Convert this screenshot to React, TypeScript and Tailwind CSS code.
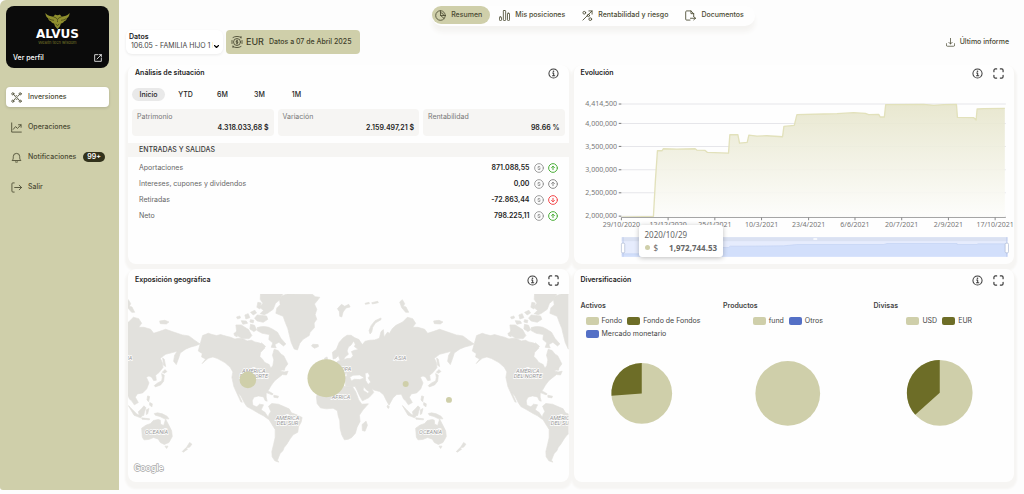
import type { ReactNode } from "react";

type IconProps = { className?: string };

const stroke = {
  fill: "none",
  stroke: "currentColor",
  strokeLinecap: "round" as const,
  strokeLinejoin: "round" as const,
};

function InfoIcon() {
  return (
    <svg viewBox="0 0 24 24" className="size-[11px]" {...stroke} strokeWidth="2.2">
      <circle cx="12" cy="12" r="10" />
      <path d="M10 11h2.4v6M9.8 17h5" />
      <circle cx="12" cy="7.2" r="0.7" fill="currentColor" />
    </svg>
  );
}

function ExpandIcon() {
  return (
    <svg viewBox="0 0 24 24" className="size-[11px]" {...stroke} strokeWidth="2.6">
      <path d="M2 8V5a3 3 0 0 1 3-3h3M16 2h3a3 3 0 0 1 3 3v3M22 16v3a3 3 0 0 1-3 3h-3M8 22H5a3 3 0 0 1-3-3v-3" />
    </svg>
  );
}

function OwlLogo() {
  return (
    <svg viewBox="0 0 72 46" className="h-[16px] w-[25px]" fill="#8f8f2e">
      <path d="M1 0c7 8 14 9 23 11l5-7c3 3 11 3 14 0l5 7c9-2 16-3 23-11-1 9-4 13-8 15-1 5-4 8-8 9-2 4-5 6-9 6l-3 8-7 8-7-8-3-8c-4 0-7-2-9-6-4-1-7-4-8-9C5 13 2 9 1 0z" />
      <path
        d="M25 12c4 0 8 2 11 7 3-5 7-7 11-7M36 21v5M11 16c5 4 9 4 15 5M61 16c-5 4-9 4-15 5M31 32l5 4 5-4"
        fill="none"
        stroke="#0b0b0b"
        strokeWidth="1.3"
      />
    </svg>
  );
}

function ExternalIcon() {
  return (
    <svg viewBox="0 0 24 24" className="size-[8px]" {...stroke} strokeWidth="2.4">
      <path d="M11 2H2v20h20v-9M15 2h7v7M22 2 9 15" />
    </svg>
  );
}

function NetworkIcon({ className }: IconProps) {
  return (
    <svg viewBox="0 0 24 24" className={className} {...stroke} strokeWidth="1.8">
      <circle cx="4" cy="4" r="2.4" />
      <circle cx="20" cy="4" r="2.4" />
      <circle cx="4" cy="20" r="2.4" />
      <circle cx="20" cy="20" r="2.4" />
      <path d="M6 6l2.500 2.500M18 6l-2.500 2.500M6 18l2.500-2.500M18 18l-2.500-2.500" />
      <path d="M14.500 9.500c-.6-1-1.500-1.400-2.600-1.400-1.500 0-2.500.8-2.500 1.900 0 2.700 5.400 1.300 5.400 4 0 1.200-1.200 2-2.700 2-1.400 0-2.400-.6-2.900-1.700" />
    </svg>
  );
}

function TrendIcon({ className }: IconProps) {
  return (
    <svg viewBox="0 0 24 24" className={className} {...stroke} strokeWidth="1.9">
      <path d="M1.500 2v20h21M5 16l5-6 4 4 8-8M16.500 6H22v5.500" />
    </svg>
  );
}

function BellIcon({ className }: IconProps) {
  return (
    <svg viewBox="0 0 24 24" className={className} {...stroke} strokeWidth="1.9">
      <path d="M3 18c2-2 2-4 2-8a7 7 0 0 1 14 0c0 4 0 6 2 8zM9.500 21.500c1.500 1 3.500 1 5 0" />
    </svg>
  );
}

function ExitIcon({ className }: IconProps) {
  return (
    <svg viewBox="0 0 24 24" className={className} {...stroke} strokeWidth="1.9">
      <path d="M7 2H4a2 2 0 0 0-2 2v16c0 1 1 2 2 2h3M8 12h15M18 7l5 5-5 5" />
    </svg>
  );
}

function PieIcon({ className }: IconProps) {
  return (
    <svg viewBox="0 0 24 24" className={className} {...stroke} strokeWidth="1.8">
      <circle cx="12" cy="12" r="10.500" />
      <path d="M12 1.500V12l8 6.500M12 12h10.500M12 5.500a7 7 0 0 1 7 6.500" />
    </svg>
  );
}

function BarsIcon({ className }: IconProps) {
  return (
    <svg viewBox="0 0 24 24" className={className} {...stroke} strokeWidth="1.8">
      <rect x="1" y="15" width="4.500" height="8" rx="1.500" />
      <rect x="9.500" y="1" width="5" height="22" rx="1.500" />
      <rect x="18.500" y="7" width="4.500" height="16" rx="1.500" />
    </svg>
  );
}

function PercentIcon({ className }: IconProps) {
  return (
    <svg viewBox="0 0 24 24" className={className} {...stroke} strokeWidth="1.9">
      <circle cx="5" cy="6" r="3" />
      <circle cx="14" cy="12" r="2.500" />
      <circle cx="18" cy="20" r="3" />
      <path d="M2 22 22 2M15 2h7v7" />
    </svg>
  );
}

function FileIcon({ className }: IconProps) {
  return (
    <svg viewBox="0 0 24 24" className={className} {...stroke} strokeWidth="1.9">
      <path d="M11 22H3.500a2 2 0 0 1-2-2V4c0-1 1-2 2-2H13l6 6v6M13 2v6h6M12 18h11M19 14.500l4 3.500-4 3.500" />
    </svg>
  );
}

function CurrencyIcon() {
  return (
    <svg viewBox="0 0 24 24" className="size-[12px]" {...stroke} strokeWidth="1.6">
      <circle cx="12" cy="12" r="7" />
      <path d="M13.800 10c-.5-.8-3.500-1-3.500.6 0 1.800 3.600 1 3.600 2.800 0 1.600-3 1.600-3.800.4M12 8v8M4 3c5-3 11-3 16 0M4 21c5 3 11 3 16 0M20 1v3M4 23v-3M2 9v6M22 9v6" />
    </svg>
  );
}

function DownloadIcon() {
  return (
    <svg viewBox="0 0 24 24" className="size-[9px]" {...stroke} strokeWidth="2">
      <path d="M12 1v15M7.500 11.500 12 16l4.500-4.500M1 15v4c0 2 1 3 3 3h16c2 0 3-1 3-3v-4" />
    </svg>
  );
}

function DollarBadge() {
  return (
    <svg viewBox="0 0 24 24" className="size-[10px] text-[#8b8b8b]" {...stroke} strokeWidth="2">
      <circle cx="12" cy="12" r="10.500" />
      <path d="M15 9.500c-.6-1-1.600-1.500-3-1.500-1.600 0-2.900.7-2.900 1.900 0 2.900 6 1.300 6 4.200 0 1.200-1.300 1.900-3.100 1.900-1.500 0-2.600-.5-3.200-1.500" />
    </svg>
  );
}

function ArrowBadge({ tone }: { tone: "up" | "flat" | "down" }) {
  const color = { up: "text-[#4caf3a]", flat: "text-[#8b8b8b]", down: "text-[#f2494c]" }[tone];
  return (
    <svg viewBox="0 0 24 24" className={"size-[10px] " + color} {...stroke} strokeWidth="2.400">
      <circle cx="12" cy="12" r="10.500" />
      <path d={tone === "down" ? "M12 8v8M8.500 13l3.500 3.500 3.500-3.500" : "M12 16V8M8.500 11l3.500-3.500 3.500 3.500"} />
    </svg>
  );
}

function Card({
  title,
  expand = true,
  tall = false,
  children,
}: {
  title: string;
  expand?: boolean;
  tall?: boolean;
  children: ReactNode;
}) {
  return (
    <section className="relative flex min-w-0 flex-col rounded-[8px] bg-[#fefefe] shadow-[0_4px_2px_3px_#f6f5f3]">
      <header className={"flex items-center justify-between pr-[10px] pl-[7px] " + (tall ? "h-[22px]" : "h-4")}>
        <h2 className="text-[7px] font-semibold text-[#222]">{title}</h2>
        <div className="flex gap-[10px] text-[#3c3c3c]">
          <button aria-label={"Información sobre " + title}>
            <InfoIcon />
          </button>
          {expand && (
            <button aria-label={"Ampliar " + title}>
              <ExpandIcon />
            </button>
          )}
        </div>
      </header>
      {children}
    </section>
  );
}

const menu = [
  { label: "Inversiones", Icon: NetworkIcon, active: true },
  { label: "Operaciones", Icon: TrendIcon },
  { label: "Notificaciones", Icon: BellIcon, badge: "99+" },
  { label: "Salir", Icon: ExitIcon },
];

function Sidebar() {
  return (
    <aside className="w-[119px] shrink-0 rounded-tl-[6px] rounded-bl-[3px] bg-[#cfcfaa] py-[6px] pr-[10px] pl-[6px]">
      <div className="flex h-[62px] flex-col rounded-[8px] bg-[#0b0b0b] pt-[7px] text-white">
        <div className="flex flex-col items-center">
          <OwlLogo />
          <span className="font-['DejaVu_Sans',sans-serif] text-[12px] leading-[11px] font-bold">ALVUS</span>
          <span className="text-[4px] leading-[6px] text-[#77772a]">Wealth tech wisdom</span>
        </div>
        <a
          href="#perfil"
          className="mt-auto flex items-center justify-between px-[7px] pb-[5px] text-[7px] leading-[10px] font-medium"
        >
          Ver perfil
          <ExternalIcon />
        </a>
      </div>
      <nav className="mt-[19px] flex flex-col gap-[10px]">
        {menu.map(({ label, Icon, active, badge }) => (
          <a
            key={label}
            href={"#" + label.toLowerCase()}
            className={
              "flex h-5 items-center rounded-[4px] pl-[5px] text-[7px] font-medium text-[#4a4a32] " +
              (active ? "bg-white shadow-[0_1px_3px_rgba(0,0,0,0.15)]" : "")
            }
          >
            <Icon className="mr-[6px] size-[11px]" />
            {label}
            {badge && (
              <span className="ml-[7px] rounded-full bg-[#32321c] px-[4px] text-[7px] leading-[10px] font-semibold text-white">
                {badge}
              </span>
            )}
          </a>
        ))}
      </nav>
    </aside>
  );
}

const sections = [
  { label: "Resumen", Icon: PieIcon, active: true },
  { label: "Mis posiciones", Icon: BarsIcon },
  { label: "Rentabilidad y riesgo", Icon: PercentIcon },
  { label: "Documentos", Icon: FileIcon },
];

function SectionNav() {
  return (
    <nav className="mx-auto flex gap-[6px] rounded-[10px] bg-[#fefefe] pr-[3px] pb-[2px] shadow-[0_6px_5px_0px_#f4f3f1]">
      {sections.map(({ label, Icon, active }) => (
        <a
          key={label}
          href={"#" + label.split(" ")[0].toLowerCase()}
          className={
            "flex h-[18px] items-center gap-[5px] rounded-full pr-[8px] pl-[3px] text-[7px] font-medium whitespace-nowrap text-[#4a4a32] " +
            (active ? "bg-[#cfcfaa]" : "")
          }
        >
          <Icon className="size-[11px]" />
          {label}
        </a>
      ))}
    </nav>
  );
}

function Toolbar() {
  return (
    <div className="flex items-center gap-[3px] pr-[5px]">
      <div className="flex h-6 w-[97px] flex-col justify-center rounded-[6px] bg-white pl-[3px] shadow-[0_1px_3px_rgba(0,0,0,0.08)]">
        <label htmlFor="portfolio" className="text-[7px] leading-[9px] font-semibold text-[#222]">
          Datos
        </label>
        <div className="flex items-center">
          <select
            id="portfolio"
            className="h-[12px] w-[84px] appearance-none overflow-hidden pl-[2px] text-[7px] text-[#444]"
          >
            <option>106.05 - FAMILIA HIJO 1 I</option>
          </select>
          <svg viewBox="0 0 10 6" className="ml-px h-[3px] w-[5px]" {...stroke} strokeWidth="2.200">
            <path d="M1 1l4 4 4-4" />
          </svg>
        </div>
      </div>
      <div className="flex h-6 items-center rounded-[4px] bg-[#cfcfaa] px-[7px] pl-[5px] text-[#3f3f2a]">
        <CurrencyIcon />
        <span className="ml-[3px] text-[9px] font-medium">EUR</span>
        <span className="ml-[5px] pr-[2px] text-[7px] font-medium">Datos a 07 de Abril 2025</span>
      </div>
      <button className="ml-auto flex items-center gap-[5px] text-[7px] font-medium text-[#4a4a32]">
        <DownloadIcon />
        Último informe
      </button>
    </div>
  );
}

const stats = [
  { label: "Patrimonio", value: "4.318.033,68 $" },
  { label: "Variación", value: "2.159.497,21 $" },
  { label: "Rentabilidad", value: "98.66 %" },
];

const flows: { label: string; value: string; tone: "up" | "flat" | "down" }[] = [
  { label: "Aportaciones", value: "871.088,55", tone: "up" },
  { label: "Intereses, cupones y dividendos", value: "0,00", tone: "flat" },
  { label: "Retiradas", value: "-72.863,44", tone: "down" },
  { label: "Neto", value: "798.225,11", tone: "up" },
];

function Analysis() {
  return (
    <Card title="Análisis de situación" expand={false}>
      <div className="flex gap-1 px-1 pt-[7px]">
        {["Inicio", "YTD", "6M", "3M", "1M"].map((range, i) => (
          <button
            key={range}
            className={
              "h-[13px] w-[33px] rounded-full text-[7px] leading-[13px] font-medium text-[#222] " +
              (i === 0 ? "bg-[#e9e9e9]" : "")
            }
          >
            {range}
          </button>
        ))}
      </div>
      <div className="mt-2 grid grid-cols-3 gap-1 px-1">
        {stats.map((s) => (
          <div key={s.label} className="rounded-[4px] bg-[#f6f5f3] px-[5px] pt-[2px] pb-[3px] leading-[11px]">
            <p className="text-[7px] text-[#777]">{s.label}</p>
            <p className="text-right text-[7px] font-semibold text-[#222]">{s.value}</p>
          </div>
        ))}
      </div>
      <h3 className="mt-[7px] bg-[#f6f5f3] pl-[11px] text-[7px] leading-[14px] font-medium text-[#3c3c3c]">
        ENTRADAS Y SALIDAS
      </h3>
      <table className="mt-[3px] w-full text-[7px]">
        <tbody>
          {flows.map((f) => (
            <tr key={f.label} className="h-4">
              <th scope="row" className="pl-[11px] text-left font-normal text-[#666]">
                {f.label}
              </th>
              <td className="pr-[11px]">
                <div className="flex items-center justify-end gap-1 font-semibold text-[#222]">
                  {f.value}
                  <DollarBadge />
                  <ArrowBadge tone={f.tone} />
                </div>
              </td>
            </tr>
          ))}
        </tbody>
      </table>
    </Card>
  );
}

const yTicks: [string, number][] = [
  ["4,414,500", 132],
  ["4,000,000", 190],
  ["3,500,000", 259],
  ["3,000,000", 329],
  ["2,500,000", 398],
  ["2,000,000", 468],
];

const xTicks: [string, number][] = [
  ["29/10/2020", 154],
  ["12/12/2020", 294],
  ["25/1/2021", 434],
  ["10/3/2021", 574],
  ["23/4/2021", 715],
  ["6/6/2021", 854],
  ["20/7/2021", 994],
  ["2/9/2021", 1134],
  ["17/10/2021", 1274],
];

const series =
  "155,471 250,469 256,360 262,272 276,272 280,266 320,267 375,266 380,270 405,271 412,277 475,279 479,224 503,224 508,249 531,247 536,225 560,228 590,227 637,230 641,199 672,196 680,164 760,162 800,161 850,158 885,160 895,164 925,163 930,171 942,171 946,134 1060,133 1090,136 1120,134 1158,133 1161,172 1210,173 1217,180 1220,147 1240,146 1303,145";

function Evolution() {
  return (
    <Card title="Evolución">
      <div className="relative">
        <svg viewBox="12 63 1320 549" className="w-full font-['Noto_Sans',sans-serif]">
          <defs>
            <linearGradient id="area" x1="0" y1="0" x2="0" y2="1">
              <stop offset="0" stopColor="#e6e5cb" />
              <stop offset="1" stopColor="#fdfdfb" />
            </linearGradient>
          </defs>
          {yTicks.map(([label, y]) => (
            <g key={label}>
              <path d={`M155 ${y}H1306`} stroke="#e6e6ea" strokeWidth="3" />
              <path d={`M146 ${y}h8`} stroke="#777" strokeWidth="3" />
              <text x="141" y={y + 7} textAnchor="end" fontSize="21" fill="#777">
                {label}
              </text>
            </g>
          ))}
          <polygon points={"155,471 " + series + " 1303,471"} fill="url(#area)" fillOpacity="0.9" />
          <polyline points={series} fill="none" stroke="#e2e1bb" strokeWidth="4" strokeLinejoin="round" />
          <path d="M154 472H1306" stroke="#a5a5a5" strokeWidth="3" />
          {xTicks.map(([label, x]) => (
            <g key={label}>
              <path d={`M${x} 472v8`} stroke="#888" strokeWidth="3" />
              <text x={x} y="500" textAnchor="middle" fontSize="21" fill="#777">
                {label}
              </text>
            </g>
          ))}
          <rect x="155" y="531" width="1156" height="59" fill="#e6ecfd" />
          <rect x="155" y="531" width="1156" height="12" fill="#dae1f2" />
          <path
            d="M155 581H250L258 563L475 562L480 558H520L640 557L680 553L940 553L950 550H1160V553H1220L1222 551H1311V590H155z"
            fill="#d2dffb"
          />
          <path
            d="M155 581H250L258 563L475 562L480 558H520L640 557L680 553L940 553L950 550H1160V553H1220L1222 551H1311"
            fill="none"
            stroke="#c3d2f3"
            strokeWidth="2"
          />
          <rect x="729" y="534" width="12" height="5" rx="2" fill="#fff" />
          {[159, 1309].map((x) => (
            <g key={x}>
              <path d={`M${x} 531v59`} stroke="#b4c3ea" strokeWidth="2" />
              <rect x={x - 5} y="549" width="10" height="29" rx="3" fill="#fff" stroke="#acb8d1" strokeWidth="2" />
            </g>
          ))}
        </svg>
        <div className="absolute top-[144px] left-[65px] rounded-[3px] bg-white px-[6px] py-[3px] font-['Noto_Sans',sans-serif] text-[8px] text-[#666] shadow-[0_1px_5px_rgba(0,0,0,0.25)]">
          <p className="leading-[13px]">2020/10/29</p>
          <p className="flex items-center leading-[13px]">
            <span className="mr-1 size-[5px] rounded-full bg-[#cfcfaa]" />$
            <b className="ml-[11px] font-bold">1,972,744.53</b>
          </p>
        </div>
      </div>
    </Card>
  );
}

function World() {
  return (
    <g id="world">
      <g transform="translate(-24 -87)">
        <path d="M248 212l17-7 12 4 13 3 12-3 18 5 12 3 13 5 12-2 13 2 12 6 13-2 10 5 14 3 10 6 5 10-12 13-2 12 8 8 6 9 14 7 5 11 6-8 3-17-4-14 5-18 12 4 8 10 9 6 6 12 6 12-9 12-14 9 12 3 12-2-5 11-12-1-13 10-11 9-10 14-7 12-8 12 0 11 3 12-6-2-5-11-15-3-14 4-5 11 2 13 12 5 8-8 12 2-7 15 12 8 6 10 9 7-6 3-14-10-15-8-17-10-18-10-8-12-10-20-8-9 12 28-4-1-13-28-8-18-6-28 3-16-8-14-16-14-22-12-14-5-14 4-12 10-6 6 10-14-12-6 2-10-12-8z" />
        <path d="M422 377q15-6 38 10l-3 3q-22-10-35-10zM462 391l14 3-2 5-12-2zM485 308l10 2-1 6-11-1z" />
        <path d="M446 424l10-8 20 2 18 8 14 6 7 12 16 6 16 8-3 14-8 14-2 16-14 8-9 12-10 16-8 10-4 10-8 8-4 10-4 10 4 6-12-4-8-12-1-16 5-20 5-22 0-24-10-16-10-16 1-12 6-10z" />
        <path d="M487 92l15-5 76 1 8 7 14 2-9 12-7 8 7 16-5 16 5 14-8 11 1 14-13 14-3 10-18 11-10 12-7 20-10-3-9-20-5-20-5-21-8-20-6-17-22-9 3-16 10-10-2-16z" />
        <path d="M422 87h66l-9 18-12 10-7 18-17 12-10 4-12-3 10-10-12-9 10-12-8-12zM414 112l10 2-4 18-9-5zM412 150l28 3 4 10-14 9-18-4-8-8zM375 150l10-4 5 12-12 4zM392 142l13-6 5 8-10 6zM350 156l10-3 2 6-9 3zM348 180l16 0 22 14 10 18-8 9-22 0-20-14 4-10zM392 178l12 3 6 14-8 5-12-8zM364 167l15 1 4 7-14 3zM392 164l10 2-2 8-10-3zM412 188q25-8 45 4l16 10 10 18 15 17-7 6-14-11-12 7 4 10-15-2 5-13-12-10 2-15-22-4-15-8zM414 244l11-10 12 10-5 7zM342 205l8-3 2 14-8-4z" />
      </g>
      <g transform="translate(516 -12)">
        <path d="M100 207l-2-20 12-9 8-20 12-14 12-8 12 0 10 7 14 6 0 10-12 3-4-9-8 12-8 6-4 12 4 10-10 8-5 9-10 2-5-15-8 8z" />
        <path d="M72 275l5-25 18-9-6-12 15-6 11-10 15-3 12-4 12-1 6-8-5-12 9-4 12-2-12-9 6-14 8-6 10 14 8-10 14-3 15-1 14-5 5-20 7-6 2 22 11-15 5 5 9-15 11-10 20-10 14-14 16 4 9 14-9 12 16 0 20 6 9 12 16-5 20-7 20 7 30 10 20 3 16 12 17 12-11 5-16 4-15 6-17 12-4 13-8 22-8-10 3-18 8-12-15 4-20 5-16 12 6 13 2 15-12 15-10 8 2 15-8 1-6-10-8-4-8 4 8 17-7 18-12 12-16 3-6 10 9 16-12 7-8-12-6-5-7-15-14 1-11 10-12 22-9-16-7-15-12-10-18-5-6-5 6 13-14 15-20 10-8-14-8-18-6-11-28-1-2-16-10-8-8 8 4 12-6 4-12-20-14 0-8 8-14 10z" />
        <path d="M50 320l8-20 12-17 28-5 14 8 26 4 20 0 10 16 9 24 9 13 20-1-16 18-11 16 2 19-9 17-5 18-11 13-10 5-12 2-8-15-5-20-1-22-5-16-2-14-13-8-20 2-18-3-10-13z" />
        <path d="M188 422l-1-18 12-10 4 12-7 18zM35 168l4-5 16 1 1 6-12 5zM74 205l8-4 2 10 8 14-14 2-2-12zM113 56l12-13 10 6 12-6 4 8-12 3-9 12-4 15-6-2-1-14zM211 132l-3-10 6-15 12-15 18-8 0 5-17 10-8 13-3 14zM300 36l8-7 7 12-4 8 8 2 8 16-9 0-12-14zM196 40l12-3 1 4-12 2zM216 38l18-4 2 4-18 4zM402 93l16-2 12 5-8 6-18-1z" />
        <path d="M386 287l10-8 12-6 2-10-2-12 8 5-2 18-9 11-16 6zM414 226l-3-22 5 4 4 22zM410 247l8-8 6 6-8 5zM308 347q12 12 26 26l14 6-3 5-20-8zM338 366l10-10 7-8 6 6-4 10-3 13-12 2zM362 360l8-4-4 16-4 2zM366 318l6 2-3 16-5-6zM372 338l8 4-1 9-7-5zM386 371l10-2 14 3 14 7 6 8-13 0-14-7-14-4zM264 346l5 5-3 5-4-5zM348 384l24 3-1 3-22-2z" />
        <path d="M348 415l13-9 14-5 8-9 15-3 6 2 1 12 9 4 6-19 8 15 10 20 2 17-10 18-14 6-12-6-6-10-14-5-15 6-14 1-5-8zM418 469l9 0-4 7zM470 485l11-11 5 4-13 9zM482 474l10-16 7 5-7 9z" />
        <path
          d="M150 262l10-6 20-1 14 9-14 5-16-1-9 5zM196 250l9-2 5 10-5 6 8 12-8 8-7-12zM140 246l-8 16 10-4zM192 290l7 9 10 7-5 4-14-9z"
          fill="#fefefe"
        />
      </g>
    </g>
  );
}

const mapLabels: { x: number; y: number; lines: string[] }[] = [
  { x: 378, y: 236, lines: ["AMÉRICA", "DEL NORTE"] },
  { x: 1201, y: 236, lines: ["AMÉRICA", "DEL NORTE"] },
  { x: 479, y: 378, lines: ["AMÉRICA", "DEL SUR"] },
  { x: 1302, y: 378, lines: ["AMÉRICA", "DEL SUR"] },
  { x: 640, y: 232, lines: ["EUROPA"] },
  { x: 640, y: 316, lines: ["ÁFRICA"] },
  { x: 818, y: 197, lines: ["ASIA"] },
  { x: -5, y: 197, lines: ["ASIA"] },
  { x: 86, y: 420, lines: ["OCEANÍA"] },
  { x: 909, y: 420, lines: ["OCEANÍA"] },
];

function Geography() {
  return (
    <Card title="Exposición geográfica" tall>
      <svg
        viewBox="0 -9 1323 573"
        className="w-full rounded-b-[8px] font-['Roboto',sans-serif]"
        role="img"
        aria-label="Mapa de exposición geográfica"
      >
        <clipPath id="frame">
          <rect width="1323" height="564" />
        </clipPath>
        <g clipPath="url(#frame)">
          <g fill="#e2e1dd" stroke="#e2e1dd" strokeWidth="2" strokeLinejoin="round">
            <World />
            <use href="#world" x="-823" />
            <use href="#world" x="823" />
          </g>
          <g
            fontSize="17"
            fontStyle="italic"
            fill="#969696"
            stroke="#fff"
            strokeWidth="4"
            paintOrder="stroke"
            textAnchor="middle"
          >
            {mapLabels.map((l) => (
              <text key={l.x + "-" + l.y} x={l.x} y={l.y}>
                {l.lines.map((line, i) => (
                  <tspan key={line} x={l.x} dy={i * 16}>
                    {line}
                  </tspan>
                ))}
              </text>
            ))}
          </g>
          <g fill="#cfcfaa">
            <circle cx="360" cy="258" r="25" />
            <circle cx="596" cy="253" r="57" />
            <circle cx="834" cy="270" r="9" />
            <circle cx="964" cy="318" r="9" />
          </g>
          <text
            x="18"
            y="531"
            fontSize="28"
            fontWeight="500"
            fill="#fff"
            stroke="#a9a9a9"
            strokeWidth="4"
            paintOrder="stroke"
          >
            Google
          </text>
        </g>
      </svg>
    </Card>
  );
}

const swatches = { sand: "bg-[#cfcfaa]", olive: "bg-[#6d6d27]", blue: "bg-[#5470c6]" };

type Breakdown = {
  title: string;
  legend: [string, keyof typeof swatches][];
  wrap?: boolean;
  share: number;
};

const breakdowns: Breakdown[] = [
  {
    title: "Activos",
    legend: [
      ["Fondo", "sand"],
      ["Fondo de Fondos", "olive"],
      ["Mercado monetario", "blue"],
    ],
    wrap: true,
    share: 0.737,
  },
  {
    title: "Productos",
    legend: [
      ["fund", "sand"],
      ["Otros", "blue"],
    ],
    share: 1,
  },
  {
    title: "Divisas",
    legend: [
      ["USD", "sand"],
      ["EUR", "olive"],
    ],
    share: 0.634,
  },
];

function Pie({ share }: { share: number }) {
  const angle = share * 2 * Math.PI;
  const x = 100 + 50 * Math.sin(angle);
  const y = 50 - 50 * Math.cos(angle);
  return (
    <svg viewBox="0 0 200 100" className="w-full">
      <circle cx="100" cy="50" r="50" fill="#cfcfaa" />
      {share < 1 && <path d={`M100 50L${x} ${y}A50 50 0 0 1 100 0z`} fill="#6d6d27" />}
    </svg>
  );
}

function Diversification() {
  return (
    <Card title="Diversificación" tall>
      <div className="grid grid-cols-[122fr_130fr_132fr] gap-[21px] pt-[7px] pr-[9px] pl-[7px]">
        {breakdowns.map((b) => (
          <div key={b.title} className="min-w-0">
            <h3 className="text-[7px] leading-[15px] font-semibold text-[#444]">{b.title}</h3>
            <ul
              className={
                "flex min-h-[28px] flex-wrap content-start gap-x-[5px] pt-px " +
                (b.wrap ? "pl-[5px]" : "justify-center")
              }
            >
              {b.legend.map(([name, color]) => (
                <li
                  key={name}
                  className="flex items-center gap-[3px] text-[7px] leading-[13px] whitespace-nowrap text-[#444]"
                >
                  <span className={"h-[8px] w-[13px] rounded-[2px] " + swatches[color]} />
                  {name}
                </li>
              ))}
            </ul>
            <div className="flex h-[104px] items-center">
              <Pie share={b.share} />
            </div>
          </div>
        ))}
      </div>
    </Card>
  );
}

export default function App() {
  return (
    <div className="min-h-screen bg-[#fdfdfd] pb-1 font-['Inter',sans-serif]">
      <div className="flex min-h-[490px]">
        <Sidebar />
        <main className="flex min-w-0 flex-1 flex-col pt-[6px] pr-[10px] pl-[9px]">
          <div className="flex pr-[9px] pl-[54px]">
            <SectionNav />
          </div>
          <div className="mt-1 -ml-[2px]">
            <Toolbar />
          </div>
          <div className="mt-[11px] grid grid-cols-2 gap-[5px]">
            <Analysis />
            <Evolution />
            <Geography />
            <Diversification />
          </div>
        </main>
      </div>
    </div>
  );
}
